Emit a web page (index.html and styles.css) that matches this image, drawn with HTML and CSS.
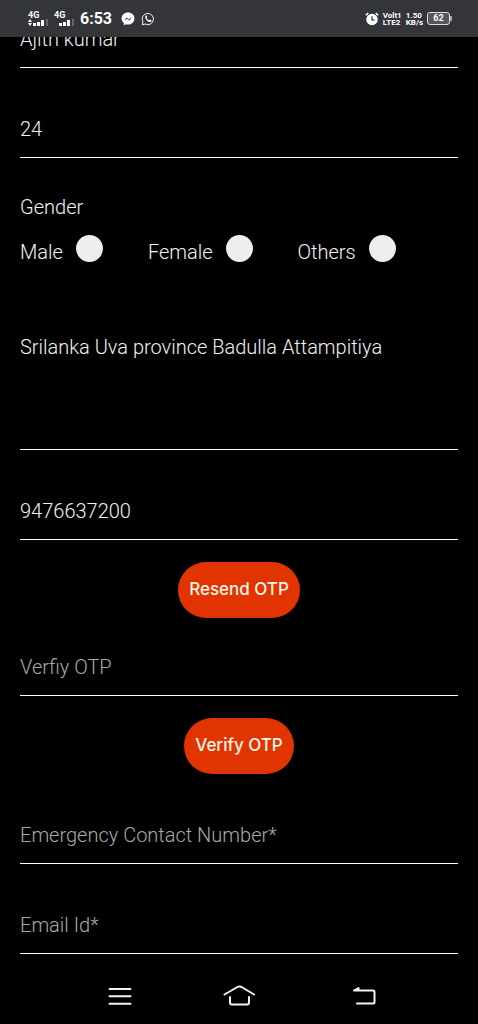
FILE: index.html
```html
<!DOCTYPE html>
<html lang="en">
<head>
<meta charset="utf-8">
<meta name="viewport" content="width=device-width, initial-scale=1">
<title>Registration</title>
<link rel="stylesheet" href="styles.css">
</head>
<body>
<header class="status">
  <div class="status-group">
    <div class="signal">
      <span class="signal-name">4G</span>
      <svg width="20" height="7" viewBox="0 0 20 7" fill="#fff"><path d="M0 3 2 0l2 3zM0 4h4L2 7zM5 4h3v3H5zM9 3h3v4H9zM13 1h3v6h-3z"/><path d="M18 0h2v7h-2z" fill="#66676a"/></svg>
    </div>
    <div class="signal">
      <span class="signal-name">4G</span>
      <svg width="20" height="7" viewBox="0 0 20 7" fill="#fff"><path d="M5 4h3v3H5zM9 3h3v4H9zM13 1h3v6h-3z"/><path d="M18 0h2v7h-2z" fill="#66676a"/></svg>
    </div>
    <span class="clock">6:53</span>
    <svg class="messenger" width="14" height="14" viewBox="0 0 14 14"><path d="M7 .5C3.200.5.600 3 .6 6.500c0 1.900.8 3.400 2.200 4.500v2.500l2-1.200c.7.200 1.400.3 2.200.3 3.800 0 6.400-2.600 6.400-6.100S10.800.5 7 .5z" fill="#fff"/><path d="M3 8.500 5.800 5.500 7.800 7.300 11 5.200 8.200 8.400 6.200 6.700z" fill="#343539"/></svg>
    <svg width="14" height="14" viewBox="0 0 14 14"><path d="M1.200 12.800 2 9.900A5.600 5.600 0 1 1 4.200 12z" fill="none" stroke="#f2f2f2" stroke-width="1"/><path d="M4.500 3.800c.5-.6 1-.5 1.200 0l.5 1.200c.1.400-.3.700-.6 1.100.6 1.200 1.300 1.800 2.400 2.300.5-.6.800-1 1.200-.8l1.200.6c.3.200.1 1.100-.4 1.500-2.500 1.700-6.700-2.800-5.500-5.900z" fill="#fff"/></svg>
  </div>
  <div class="status-group status-right">
    <svg width="14" height="14" viewBox="0 0 14 14"><circle cx="7" cy="7.500" r="5.700" fill="#fff"/><path d="M.8 3.300 3.300 1.100M13.200 3.300 10.700 1.100" stroke="#fff" stroke-width="1.500" fill="none"/><path d="M7 4.200v3.700h2.500" stroke="#343539" stroke-width="1.200" fill="none"/></svg>
    <span class="tiny">Volt1<br>LTE2</span>
    <span class="tiny">1.50<br>KB/s</span>
    <span class="battery">62</span>
  </div>
</header>

<main>
  <form class="form">
    <input class="field" type="text" aria-label="Name" value="Ajith kumar">
    <input class="field" type="text" aria-label="Age" value="24">
    <fieldset class="gender">
      <legend class="gender-title">Gender</legend>
      <div class="options">
        <label class="option"><span>Male</span><input class="radio" type="radio" name="gender"></label>
        <label class="option"><span>Female</span><input class="radio" type="radio" name="gender"></label>
        <label class="option"><span>Others</span><input class="radio" type="radio" name="gender"></label>
      </div>
    </fieldset>
    <textarea class="field address" aria-label="Address">Srilanka Uva province Badulla Attampitiya</textarea>
    <input class="field" type="tel" aria-label="Contact number" value="9476637200">
    <button class="button" type="button">Resend OTP</button>
    <input class="field" type="text" aria-label="Verify OTP" placeholder="Verfiy OTP">
    <button class="button" type="button">Verify OTP</button>
    <div class="contact">
      <input class="field" type="tel" aria-label="Emergency contact number" placeholder="Emergency Contact Number*">
      <input class="field" type="email" aria-label="Email id" placeholder="Email Id*">
    </div>
  </form>
</main>

<nav class="navbar">
  <button class="nav-button" type="button" aria-label="Recent apps"><svg width="32" height="24" viewBox="0 0 32 24"><path d="M7.500 5h21M7.500 12.300h21M7.500 19.700h21"/></svg></button>
  <button class="nav-button" type="button" aria-label="Home"><svg width="32" height="24" viewBox="0 0 32 24"><path d="M1.500 10.500 13.500 3.500Q16.500 1.500 19.500 3.500L31 10.500M7 13v5.500q0 2 2 2h15q2 0 2-2V13"/></svg></button>
  <button class="nav-button" type="button" aria-label="Back"><svg width="32" height="24" viewBox="0 0 32 24"><path d="M14.500 4 10 6.500H14.500zM10 6.500H29q1.500 0 1.500 1.500v10q0 1.500-1.500 1.500H13"/></svg></button>
</nav>
</body>
</html>
```
FILE: styles.css
```css
* {
  box-sizing: border-box;
}

body {
  margin: 0;
  min-height: 100vh;
  display: flex;
  flex-direction: column;
  background: #000;
  color: #f2f2f2;
  font-family: Roboto, "Liberation Sans", sans-serif;
}

.status {
  position: fixed;
  top: 0;
  left: 0;
  right: 0;
  z-index: 1;
  height: 37px;
  padding: 0 28px;
  display: flex;
  align-items: center;
  justify-content: space-between;
  background: #343539;
  color: #fff;
}

.status-group {
  display: flex;
  align-items: center;
  gap: 6px;
}

.signal {
  display: flex;
  flex-direction: column;
}

.signal-name {
  font-size: 9px;
  font-weight: 700;
  line-height: 8px;
}

.clock {
  font-size: 16px;
  font-weight: 700;
  line-height: 20px;
}

.messenger {
  margin-left: 3px;
}

.status-right {
  gap: 4px;
}

.tiny {
  font-size: 8px;
  font-weight: 700;
  line-height: 7px;
}

.battery {
  position: relative;
  width: 23px;
  height: 13px;
  border: 1px solid #ddd;
  border-radius: 3px;
  background: #56575a;
  font-size: 9px;
  font-weight: 700;
  line-height: 11px;
  text-align: center;
}

.battery::after {
  content: "";
  position: absolute;
  right: -3px;
  top: 3px;
  width: 2px;
  height: 5px;
  background: #aaa;
}

.form {
  display: flex;
  flex-direction: column;
  gap: 30px;
  padding: 8px 20px 0;
}

.field {
  display: block;
  width: 100%;
  height: 60px;
  margin: 0;
  padding: 2px 0 0;
  border: 0;
  border-bottom: 1px solid #fff;
  border-radius: 0;
  outline: 0;
  background: transparent;
  color: #f2f2f2;
  font-family: inherit;
  font-size: 20px;
  font-weight: 300;
  line-height: 24px;
}

.field::placeholder {
  color: #aaa;
  opacity: 1;
}

.gender {
  min-width: 0;
  margin: 0;
  padding: 7px 0 5px;
  border: 0;
  font-size: 20px;
  font-weight: 300;
  line-height: 24px;
}

.gender-title {
  float: left;
  width: 100%;
  padding: 0;
}

.options {
  clear: both;
  display: flex;
  gap: 45px;
  padding-top: 16px;
}

.option {
  display: flex;
  gap: 13px;
}

.option span {
  padding-top: 5px;
}

.radio {
  appearance: none;
  width: 27px;
  height: 27px;
  margin: 0;
  border-radius: 50%;
  background: #eee;
}

.radio:checked {
  border: 8px solid #eee;
  background: #e23400;
}

.address {
  height: 151px;
  padding-top: 36px;
  resize: none;
  overflow: hidden;
}

.button {
  align-self: center;
  height: 56px;
  margin: -8px 0 -12px;
  padding: 0 11px 2px;
  border: 0;
  border-radius: 28px;
  background: #e23400;
  color: #fff5e8;
  font-family: Inter, "Open Sans", sans-serif;
  font-size: 17px;
  font-weight: 500;
}

.contact {
  display: flex;
  flex-direction: column;
  gap: 30px;
  padding-top: 12px;
}

.navbar {
  display: flex;
  justify-content: space-between;
  margin-top: auto;
  padding: 16px 102px;
}

.nav-button {
  display: flex;
  padding: 0;
  border: 0;
  background: transparent;
}

.nav-button path {
  fill: none;
  stroke: #f2f2f2;
  stroke-width: 2;
  stroke-linecap: round;
  stroke-linejoin: round;
}
```
